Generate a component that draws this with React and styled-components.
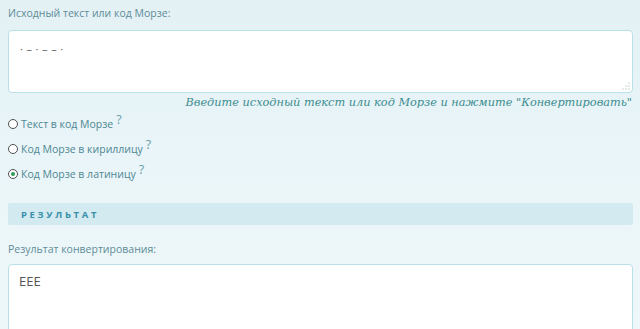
import React from "react";
import styled, { createGlobalStyle } from "styled-components";

const Global = createGlobalStyle`
  html, body { margin: 0; padding: 0; }
  body {
    background: linear-gradient(180deg, #e3f1f5 0%, #ebf6f9 60%, #eef7fa 100%);
    min-height: 329px;
    overflow: hidden;
    font-family: "Open Sans", "Noto Sans", sans-serif;
  }
`;

const Page = styled.div`
  display: flex;
  flex-direction: column;
  padding: 6px 7px 0 8px;
`;

const Label = styled.div`
  font-size: 10.5px;
  line-height: 14px;
  color: #5f8c97;
  margin-top: ${(p) => p.$mt || 0}px;
`;

const AreaWrap = styled.div`
  position: relative;
  margin-top: ${(p) => p.$mt || 0}px;
`;

const Area = styled.textarea`
  box-sizing: border-box;
  width: 100%;
  height: ${(p) => p.$h}px;
  border: 1px solid #b9dfe8;
  border-radius: 4px;
  background: #fff;
  padding: ${(p) => p.$pad};
  font-family: "Open Sans", "Noto Sans", sans-serif;
  font-size: ${(p) => p.$fs}px;
  letter-spacing: ${(p) => p.$ls || 0}px;
  color: ${(p) => p.$color};
  outline: none;
  display: block;
  resize: none;
`;

const Grip = styled.svg`
  position: absolute;
  right: 3px;
  bottom: 3px;
  width: 8px;
  height: 8px;
`;

const GripIcon = () => (
  <Grip viewBox="0 0 8 8">
    {[
      [7, 1],
      [4, 4],
      [7, 4],
      [1, 7],
      [4, 7],
      [7, 7],
    ].map(([x, y]) => (
      <rect key={`${x}-${y}`} x={x - 0.7} y={y - 0.7} width="1.4" height="1.4" fill="#c9d3d6" />
    ))}
  </Grip>
);

const Hint = styled.div`
  text-align: right;
  font-family: "DejaVu Serif", "Liberation Serif", serif;
  font-style: italic;
  font-size: 11.3px;
  line-height: 16px;
  color: #3b8c8f;
  margin-top: 2px;
  padding-right: 1px;
`;

const RadioList = styled.div`
  display: flex;
  flex-direction: column;
  gap: 9px;
  margin-top: 5px;
`;

const RadioRow = styled.label`
  display: flex;
  align-items: center;
  height: 16px;
  font-size: 10.5px;
  color: #4f8793;
`;

const Circle = styled.span`
  box-sizing: border-box;
  width: 10px;
  height: 10px;
  border-radius: 50%;
  border: 1px solid #505050;
  background: #fff;
  margin-right: 3px;
  display: flex;
  align-items: center;
  justify-content: center;
  &::after {
    content: "";
    width: 4px;
    height: 4px;
    border-radius: 50%;
    background: ${(p) => (p.$on ? "#2f9a5a" : "transparent")};
  }
`;

const Q = styled.span`
  font-size: 12.5px;
  color: #6a9ea8;
  margin-left: 3px;
  position: relative;
  top: -5px;
`;

const ResultBar = styled.div`
  margin-top: 21px;
  height: 22px;
  border-radius: 2px;
  background: #d4eaf1;
  display: flex;
  align-items: center;
  padding-left: 13px;
  font-family: "Open Sans", "DejaVu Sans", sans-serif;
  font-weight: 700;
  font-size: 9.4px;
  letter-spacing: 2.7px;
  color: #3890a9;
`;

const options = [
  { text: "Текст в код Морзе", on: false },
  { text: "Код Морзе в кириллицу", on: false },
  { text: "Код Морзе в латиницу", on: true },
];

export default function App() {
  return (
    <>
      <Global />
      <Page>
        <Label>Исходный текст или код Морзе:</Label>
        <AreaWrap $mt={10}>
          <Area
            $h={63}
            $pad="10px 11px"
            $fs={11}
            $ls={3.6}
            $color="#666"
            readOnly
            defaultValue="·–·––·"
          />
          <GripIcon />
        </AreaWrap>
        <Hint>Введите исходный текст или код Морзе и нажмите "Конвертировать"</Hint>
        <RadioList>
          {options.map((o) => (
            <RadioRow key={o.text}>
              <Circle $on={o.on} />
              {o.text}
              <Q>?</Q>
            </RadioRow>
          ))}
        </RadioList>
        <ResultBar>РЕЗУЛЬТАТ</ResultBar>
        <Label $mt={17}>Результат конвертирования:</Label>
        <AreaWrap $mt={8}>
          <Area
            $h={80}
            $pad="7px 10px"
            $fs={13}
            $color="#555"
            readOnly
            defaultValue="EEE"
          />
          <GripIcon />
        </AreaWrap>
      </Page>
    </>
  );
}
